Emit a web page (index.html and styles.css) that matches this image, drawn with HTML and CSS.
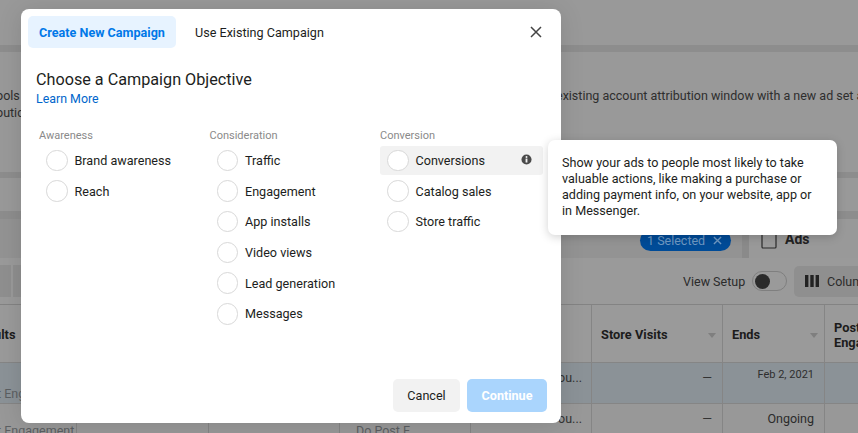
FILE: index.html
```html
<!DOCTYPE html>
<html lang="en">
<head>
<meta charset="utf-8">
<title>Choose a Campaign Objective</title>
<link rel="stylesheet" href="styles.css">
</head>
<body>
<div class="page">
  <div class="band-top"></div>
  <div class="divider"></div>
  <div class="notice">
    <div class="notice-line"><span class="notice-left">ools</span><span class="notice-right">existing account attribution window with a new ad set a</span></div>
    <div class="notice-line"><span class="notice-left">outic</span></div>
  </div>
  <div class="divider thin"></div>
  <div class="band-mid"></div>
  <div class="divider wide"></div>
  <div class="tabs-row">
    <span class="pill">1 Selected <svg class="pill-x" viewBox="0 0 10 10"><path d="M1 1l8 8M9 1l-8 8"/></svg></span>
    <span class="tab-sep"></span>
    <span class="ads-tab">
      <svg class="ads-icon" viewBox="0 0 16 24"><rect x="1" y="1" width="14" height="22" rx="1"/><path d="M4 9h8"/></svg>
      Ads
    </span>
  </div>
  <div class="toolbar">
    <div class="tool-left"><span class="tool-box first"></span><span class="tool-box"></span></div>
    <div class="tool-right">
      <span>View Setup</span>
      <span class="toggle"><span class="knob"></span></span>
      <span class="columns-btn">
        <svg class="columns-icon" viewBox="0 0 14 12"><path d="M0 0h3.400v12H0zM5.300 0h3.400v12H5.300zM10.600 0H14v12h-3.400z"/></svg>
        Columns
      </span>
    </div>
  </div>
  <div class="table">
    <div class="cell head"><span class="head-text clip-left">ults</span></div>
    <div class="cell head"></div>
    <div class="cell head"></div>
    <div class="cell head"></div>
    <div class="cell head"></div>
    <div class="cell head"><span class="head-text">Store Visits</span><span class="sort"></span></div>
    <div class="cell head"><span class="head-text">Ends</span><span class="sort"></span></div>
    <div class="cell head"><span class="head-text two">Post<br>Enga</span></div>

    <div class="cell sel low"><span class="clip-left">t Eng</span></div>
    <div class="cell sel"></div>
    <div class="cell sel"></div>
    <div class="cell sel"></div>
    <div class="cell sel end lowered"><span class="dim">ou...</span></div>
    <div class="cell sel end lowered inset"><span class="dash">—</span></div>
    <div class="cell sel end inset"><span class="small">Feb 2, 2021</span></div>
    <div class="cell sel"></div>

    <div class="cell foot"><span class="foot-text clip-foot">t Engagement</span></div>
    <div class="cell"></div>
    <div class="cell"></div>
    <div class="cell foot"><span class="foot-text push-foot">Do Post E</span></div>
    <div class="cell end mid"><span class="dim">ou...</span></div>
    <div class="cell end mid inset"><span class="dash">—</span></div>
    <div class="cell end mid inset"><span>Ongoing</span></div>
    <div class="cell"></div>
  </div>
</div>

<div class="modal">
  <div class="modal-tabs">
    <button class="tab active">Create New Campaign</button>
    <button class="tab">Use Existing Campaign</button>
    <svg class="close" viewBox="0 0 12 12"><path d="M1 1l10 10M11 1L1 11"/></svg>
  </div>
  <h1 class="title">Choose a Campaign Objective</h1>
  <a class="learn">Learn More</a>
  <div class="groups">
    <section class="group">
      <h2 class="group-label">Awareness</h2>
      <div class="option"><span class="radio"></span>Brand awareness</div>
      <div class="option"><span class="radio"></span>Reach</div>
    </section>
    <section class="group">
      <h2 class="group-label">Consideration</h2>
      <div class="option"><span class="radio"></span>Traffic</div>
      <div class="option"><span class="radio"></span>Engagement</div>
      <div class="option"><span class="radio"></span>App installs</div>
      <div class="option"><span class="radio"></span>Video views</div>
      <div class="option"><span class="radio"></span>Lead generation</div>
      <div class="option"><span class="radio"></span>Messages</div>
    </section>
    <section class="group">
      <h2 class="group-label">Conversion</h2>
      <div class="option hover"><span class="radio"></span>Conversions
        <svg class="info" viewBox="0 0 12 12"><circle cx="6" cy="6" r="5.500"/><rect class="info-mark" x="5" y="5" width="2" height="4.300"/><circle class="info-mark" cx="6" cy="3.300" r="1.100"/></svg>
      </div>
      <div class="option"><span class="radio"></span>Catalog sales</div>
      <div class="option"><span class="radio"></span>Store traffic</div>
    </section>
  </div>
  <div class="modal-footer">
    <button class="btn">Cancel</button>
    <button class="btn primary">Continue</button>
  </div>
</div>

<div class="tooltip">Show your ads to people most likely to take valuable actions, like making a purchase or adding payment info, on your website, app or in Messenger.</div>
</body>
</html>
```

FILE: styles.css
```css
* { box-sizing: border-box; }
html, body { margin: 0; height: 100%; }
body {
  width: 858px; height: 433px; overflow: hidden; position: relative;
  background: #999; color: #1c1e21;
  font-family: Roboto, "Liberation Sans", sans-serif; font-size: 12.500px;
}
.page { width: 858px; height: 433px; overflow: hidden; color: #2b2b2b; }
.band-top { height: 45px; background: #999; }
.divider { height: 7px; background: #8d8d8d; }
.divider.thin { height: 6px; }
.divider.wide { height: 8px; }
.notice { height: 120px; background: #999; padding-top: 35px; font-size: 12.500px; line-height: 17px; color: #2e2e2e; overflow: hidden; }
.notice-line { display: flex; justify-content: space-between; height: 17px; white-space: nowrap; }
.notice-left { margin-left: -4px; }
.notice-right { width: 302px; overflow: hidden; }
.band-mid { height: 33px; background: #999; }
.tabs-row { height: 39px; background: #939393; display: flex; align-items: center; padding-left: 640px; }
.pill { flex: none; width: 91px; height: 21px; margin-top: 3px; border-radius: 11px; background: #004b97; color: #6f98c2; font-size: 12.500px; line-height: 21px; padding-left: 7px; display: flex; align-items: center; gap: 5px; white-space: pre; }
.pill-x { width: 9px; height: 9px; fill: none; stroke: #6f98c2; stroke-width: 1.500; flex: none; }
.tab-sep { flex: none; width: 7px; height: 39px; background: #8a8a8a; margin-left: 11px; }
.ads-tab { flex: 1; display: flex; align-items: center; gap: 8px; padding-left: 12px; font-weight: 700; font-size: 14px; color: #222; height: 39px; background: #999; }
.ads-icon { width: 16px; height: 24px; fill: none; stroke: #2b2b2b; stroke-width: 1.200; margin-top: -4px; flex: none; }
.toolbar { height: 47px; background: #9a9a9a; border-bottom: 1px solid #838383; display: flex; justify-content: space-between; align-items: center; }
.tool-left { display: flex; gap: 2px; }
.tool-box { width: 8px; height: 32px; background: #8f8f8f; }
.tool-box.first { width: 11px; }
.tool-right { display: flex; align-items: center; font-size: 12.500px; color: #2b2b2b; white-space: nowrap; width: 175px; flex: none; }
.tool-right > span:first-child { flex: none; width: 69px; }
.toggle { flex: none; width: 35px; height: 20px; border: 1px solid #7f7f7f; border-radius: 10px; display: flex; align-items: center; padding-left: 2px; }
.knob { width: 15px; height: 15px; border-radius: 50%; background: #2b2b2b; }
.columns-btn { display: flex; align-items: center; gap: 8px; height: 31px; background: #8f8f8f; border-radius: 5px 0 0 5px; margin-left: 7px; padding-left: 11px; flex: none; width: 64px; overflow: hidden; }
.columns-icon { width: 14px; height: 12px; fill: #222; flex: none; }
.table { display: grid; grid-template-columns: 77px 132px 131px 131px 121px 131px 102px 33px; grid-template-rows: 58px 41px 29px; }
.cell { background: #989898; border-right: 1px solid #858585; border-bottom: 1px solid #858585; display: flex; align-items: center; justify-content: flex-start; padding: 0 9px; white-space: nowrap; position: relative; overflow: hidden; }
.cell.head { background: #9a9a9a; padding: 2px 10px 0 9px; }
.cell:nth-child(8n) { border-right: 0; }
.cell:nth-last-child(-n+8) { border-bottom: 0; }
.head-text { font-weight: 700; font-size: 12.800px; color: #1c1c1c; line-height: 15px; }
.clip-left { margin-left: -15px; }
.low .clip-left { margin-left: -12px; }
.sort { position: absolute; right: 6px; top: 28px; width: 0; height: 0; border: 4px solid transparent; border-top: 5px solid #7f7f7f; }
.sel { background: #8b9297; align-items: flex-start; padding-top: 5px; }
.sel.lowered { padding-top: 7px; }
.low { align-items: flex-end; padding-bottom: 2px; color: #5c5f62; }
.end { justify-content: flex-end; }
.end.inset { padding-right: 10px; }
.dash { color: #333; }
.dim { color: #333; font-size: 12.500px; }
.small { font-size: 11px; color: #2e2e2e; }
.mid { align-items: flex-start; padding-top: 7px; }
.foot { align-items: flex-start; padding-top: 19px; }
.foot-text { color: #5c5f62; line-height: 15px; }
.clip-foot { margin-left: -12px; }
.push-foot { margin-left: 7px; }
.modal { position: absolute; left: 21px; top: 9px; width: 540px; height: 414px; background: #fff; border-radius: 8px; box-shadow: 0 2px 24px rgba(0,0,0,.12); display: flex; flex-direction: column; }
.modal-tabs { display: flex; align-items: center; padding: 7px 7px 0; height: 39px; position: relative; flex: none; }
.tab { height: 32px; border: 0; background: none; font: 400 12.600px Roboto, sans-serif; color: #1c1e21; padding: 0 11px; border-radius: 5px; white-space: nowrap; margin-right: 8px; }
.tab.active { background: #e7f3ff; color: #0078e8; font-weight: 700; width: 148px; padding: 0 10px; }
.close { width: 12px; height: 12px; fill: none; stroke: #444; stroke-width: 1.500; margin-left: auto; margin-right: 12px; }
.title { margin: 22px 0 0 15px; font: 400 16.200px/20px Roboto, sans-serif; color: #1c1e21; }
.learn { margin: 1px 0 0 15px; font-size: 12.400px; line-height: 16px; color: #0066cc; }
.groups { display: grid; grid-template-columns: repeat(3, 170.500px); padding-left: 18px; margin-top: 22px; }
.group { width: 163px; }
.group-label { margin: 0; font: 400 11px/14px Roboto, sans-serif; color: #8a8a8a; height: 16px; }
.option { display: flex; align-items: center; gap: 7px; height: 30.700px; padding-left: 7px; font-size: 12.600px; color: #1c1e21; white-space: nowrap; border-radius: 3px; position: relative; }
.option.hover { background: #f2f2f2; height: 29px; margin: 0.800px 0 0.900px; }
.radio { width: 21.500px; height: 21.500px; border: 1px solid #d8d8d8; border-radius: 50%; background: #fff; flex: none; }
.info { width: 11px; height: 11px; fill: #4a4a4a; position: absolute; right: 11px; top: 8px; }
.info .info-mark { fill: #f2f2f2; }
.modal-footer { margin-top: auto; display: flex; justify-content: flex-end; gap: 7px; padding: 0 14px 11px 0; }
.btn { height: 33px; width: 67px; border: 0; border-radius: 5px; background: #f2f2f2; color: #1c1e21; font: 400 12.600px Roboto, sans-serif; }
.btn.primary { width: 80px; background: #aad5fd; color: #fff; font-weight: 700; }
.tooltip { position: absolute; left: 548px; top: 140px; width: 289px; height: 95px; background: #fff; border-radius: 7px; padding: 15px 22px 0 14px; font-size: 12.600px; line-height: 16px; color: #1c1e21; box-shadow: 0 2px 10px rgba(0,0,0,.18); }
```
